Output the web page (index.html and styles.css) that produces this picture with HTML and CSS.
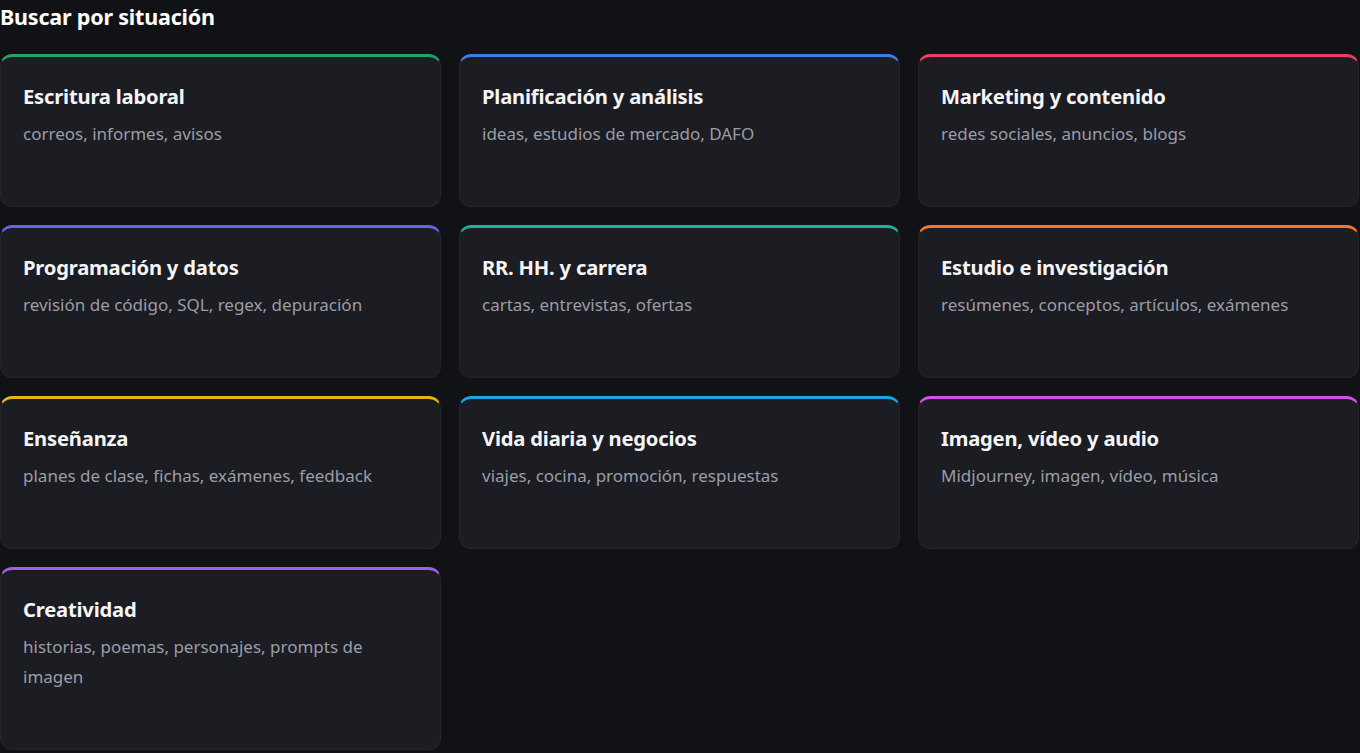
FILE: index.html
```html
<!DOCTYPE html>
<html lang="es">
<head>
<meta charset="utf-8">
<title>Buscar por situación</title>
<link rel="stylesheet" href="styles.css">
</head>
<body>
<section class="situations">
  <h2 class="situations__title">Buscar por situación</h2>
  <div class="grid">
    <a class="card card--green"><h3 class="card__title">Escritura laboral</h3><p class="card__desc">correos, informes, avisos</p></a>
    <a class="card card--blue"><h3 class="card__title">Planificación y análisis</h3><p class="card__desc">ideas, estudios de mercado, DAFO</p></a>
    <a class="card card--red"><h3 class="card__title">Marketing y contenido</h3><p class="card__desc">redes sociales, anuncios, blogs</p></a>
    <a class="card card--indigo"><h3 class="card__title">Programación y datos</h3><p class="card__desc">revisión de código, SQL, regex, depuración</p></a>
    <a class="card card--teal"><h3 class="card__title">RR. HH. y carrera</h3><p class="card__desc">cartas, entrevistas, ofertas</p></a>
    <a class="card card--orange"><h3 class="card__title">Estudio e investigación</h3><p class="card__desc">resúmenes, conceptos, artículos, exámenes</p></a>
    <a class="card card--yellow"><h3 class="card__title">Enseñanza</h3><p class="card__desc">planes de clase, fichas, exámenes, feedback</p></a>
    <a class="card card--cyan"><h3 class="card__title">Vida diaria y negocios</h3><p class="card__desc">viajes, cocina, promoción, respuestas</p></a>
    <a class="card card--fuchsia"><h3 class="card__title">Imagen, vídeo y audio</h3><p class="card__desc">Midjourney, imagen, vídeo, música</p></a>
    <a class="card card--purple"><h3 class="card__title">Creatividad</h3><p class="card__desc">historias, poemas, personajes, prompts de imagen</p></a>
  </div>
</section>
</body>
</html>
```
FILE: styles.css
```css
* { box-sizing: border-box; }
html, body { margin: 0; padding: 0; }
body {
  background: #111216;
  color: #f3f4f6;
  font-family: "Noto Sans", "Open Sans", "Liberation Sans", sans-serif;
  width: 1360px;
  height: 753px;
  overflow: hidden;
}
.situations { width: 1359px; }
.situations__title {
  margin: 0;
  padding-top: 2px;
  font-size: 21.5px;
  font-weight: 700;
  line-height: 30px;
  height: 54px;
  color: #ffffff;
  letter-spacing: -0.2px;
}
.grid {
  display: grid;
  grid-template-columns: repeat(3, 1fr);
  column-gap: 18px;
  row-gap: 18px;
  align-items: start;
}
.card {
  display: block;
  height: auto;
  background: #1c1d23;
  border: 1px solid #25262d;
  border-top: 3px solid #333;
  border-radius: 12px;
  padding: 25px 24px 57px 22px;
  text-decoration: none;
}
.card__title {
  margin: 0;
  font-size: 20.2px;
  line-height: 28px;
  font-weight: 700;
  color: #f5f5f7;
  letter-spacing: -0.2px;
}
.card__desc {
  margin: 9px 0 0;
  font-size: 17px;
  line-height: 30px;
  color: #9b9ca6;
  letter-spacing: 0;
}
.card--green { border-top-color: #22a35f; }
.card--blue { border-top-color: #3b7fe6; }
.card--red { border-top-color: #e8405d; }
.card--indigo { border-top-color: #6863e8; }
.card--teal { border-top-color: #18b39c; }
.card--orange { border-top-color: #f0782c; }
.card--yellow { border-top-color: #e6b417; }
.card--cyan { border-top-color: #1aa6e0; }
.card--fuchsia { border-top-color: #d34fe6; }
.card--purple { border-top-color: #a35ee6; }
```
